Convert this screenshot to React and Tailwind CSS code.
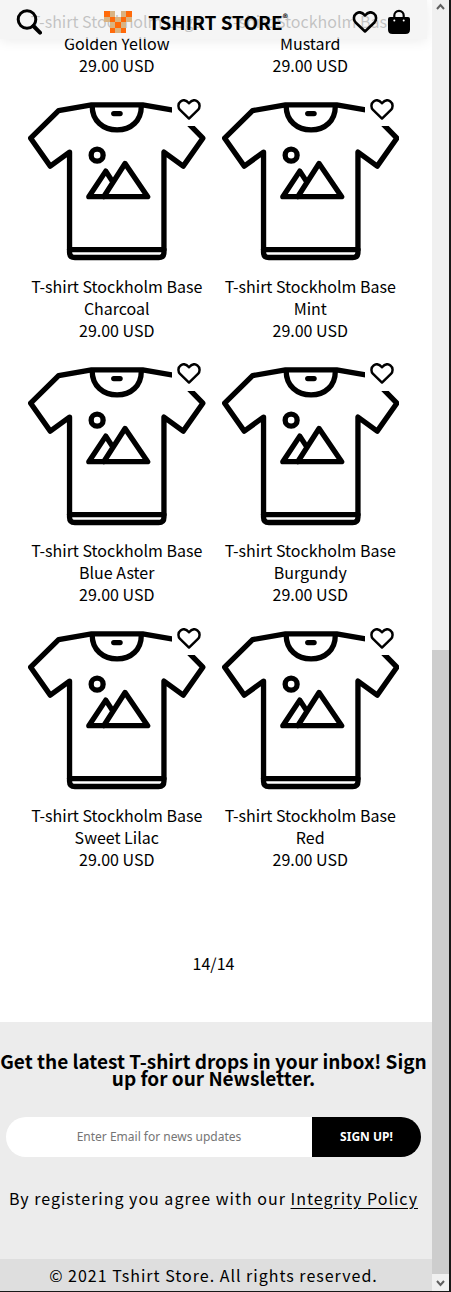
const products = [
  ['Stockholm Logo', 'Golden Yellow'],
  ['Stockholm Base', 'Mustard'],
  ['Stockholm Base', 'Charcoal'],
  ['Stockholm Base', 'Mint'],
  ['Stockholm Base', 'Blue Aster'],
  ['Stockholm Base', 'Burgundy'],
  ['Stockholm Base', 'Sweet Lilac'],
  ['Stockholm Base', 'Red'],
];

function Heart({ className }) {
  return (
    <svg viewBox="0 0 26 23" className={className} fill="none" stroke="black" strokeWidth="2.7" strokeLinejoin="round" aria-hidden="true">
      <path d="M13 21.4 3.2 12C.4 8.8 1.2 4.6 3.8 2.7 6.6.6 10.2 1.4 13 4.7 15.8 1.4 19.4.6 22.2 2.7 24.8 4.6 25.6 8.8 22.8 12Z" />
    </svg>
  );
}

function Shirt() {
  return (
    <svg viewBox="39 4 534 534" className="block w-full" fill="none" stroke="black" strokeWidth="16" strokeLinecap="round" strokeLinejoin="round" aria-hidden="true">
      <path d="M230 43H384L484 60L565 143L506 227L448 185V486Q448 502 432 502H180Q164 502 164 486V185L106 227L47 143L131 60Z" />
      <path d="M232 45C232 91 265 118 307 118S380 91 380 45" />
      <path d="M297 69H316" />
      <circle cx="247" cy="194" r="18" />
      <path d="M164 478H448" />
      <path d="M267 319 331 219 399 319H222L273 242 291 270" />
    </svg>
  );
}

function Product({ name, color, cut }) {
  return (
    <article className="px-2 text-center leading-[22px]">
      {!cut && (
        <div className="relative mb-[5px]">
          <Shirt />
          <button type="button" aria-label="Add to favourites" className="absolute right-0 top-0 flex h-[34px] w-[34px] items-center justify-center bg-white">
            <Heart className="h-[21px] w-[26px]" />
          </button>
        </div>
      )}
      <h2>T-shirt {name}<br />{color}</h2>
      <p>29.00 USD</p>
    </article>
  );
}

function Logo() {
  const orange = ['0 0', '4 0', '1 1', '3 1', '2 2', '1 3', '3 3'];
  return (
    <svg viewBox="0 0 28 22" className="h-[22px] w-7" shapeRendering="crispEdges" aria-hidden="true">
      <path d="M0 0H11.2V5.5H16.8V0H28V11H22.4V22H5.6V11H0Z" fill="#d9b382" />
      {orange.map((p) => {
        const [x, y] = p.split(' ').map(Number);
        return <rect key={p} x={x * 5.6} y={y * 5.5} width="5.6" height="5.5" fill="#ff6a0a" />;
      })}
    </svg>
  );
}

export default function App() {
  return (
    <div className="flex border-b border-r-2 border-[#181818] bg-white font-['Noto_Sans_CJK_SC',sans-serif] text-base text-black">
      <div className="relative min-w-0 flex-1 overflow-hidden">
        <header className="absolute left-0 right-[5px] top-0 z-10 flex h-[39px] items-center bg-[#f2f2f2]/80 px-4 shadow-[0_2px_12px_rgba(0,0,0,0.08)]">
          <button type="button" aria-label="Search" className="mt-1">
            <svg viewBox="0 0 26 26" className="h-[26px] w-[26px]" fill="none" stroke="black" strokeWidth="3" strokeLinecap="round" aria-hidden="true">
              <circle cx="11" cy="10.5" r="8.8" />
              <path d="m17.4 17 6.6 6.6" strokeWidth="4" />
            </svg>
          </button>
          <a href="#" className="mx-auto mt-1 flex items-center gap-4 pr-0.5">
            <Logo />
            <span className="flex whitespace-nowrap text-[19px] font-bold leading-6">TSHIRT STORE<span className="text-[10px] leading-4">®</span></span>
          </a>
          <button type="button" aria-label="Favourites" className="mr-2.5 mt-1"><Heart className="h-[22px] w-[26px]" /></button>
          <button type="button" aria-label="Bag" className="mr-px mt-1">
            <svg viewBox="0 0 22 26" className="h-[26px] w-[22px]" aria-hidden="true">
              <path d="M6.3 11V6.5a4.7 4.7 0 0 1 9.4 0V11" fill="none" stroke="black" strokeWidth="2.2" />
              <path d="M2 8H20q2 0 2 2V20.500q0 4.500-4.500 4.500H4.500Q0 25 0 20.500V10Q0 8 2 8Z" />
              <circle cx="6.3" cy="11.5" r="1" fill="white" /><circle cx="15.7" cy="11.5" r="1" fill="white" />
            </svg>
          </button>
        </header>

        <main className="pl-5 pr-[25px] pt-[10px]">
          <div className="grid grid-cols-2 gap-y-4">
            {products.map(([name, color], i) => (
              <Product key={color} name={name} color={color} cut={i < 2} />
            ))}
          </div>
          <p className="mt-[81px] pb-[47px] text-center leading-6">14/14</p>
        </main>

        <footer className="bg-[#ececec] text-center">
          <div className="pb-[49px] pr-[5px] pt-[30px]">
            <h2 className="-mx-1 text-[19px] font-bold leading-[17px]">Get the latest T-shirt drops in your inbox! Sign up for our Newsletter.</h2>
            <form className="mx-1.5 mt-[31px] flex h-10 overflow-hidden rounded-full" onSubmit={(e) => e.preventDefault()}>
              <input type="email" aria-label="Email" placeholder="Enter Email for news updates" className="min-w-0 flex-1 bg-white text-center font-['Noto_Sans',sans-serif] text-xs placeholder:text-[#757575]" />
              <button type="submit" className="w-[109px] bg-black font-['Noto_Sans',sans-serif] text-xs font-bold text-white">SIGN UP!</button>
            </form>
            <p className="mt-[29px] whitespace-nowrap leading-6 tracking-[1px]">By registering you agree with our <a href="#" className="underline underline-offset-[3px]">Integrity Policy</a></p>
          </div>
          <p className="bg-[#dedede] pr-[5px] leading-8 tracking-[1px]">© 2021 Tshirt Store. All rights reserved.</p>
        </footer>
      </div>

      <div className="flex w-[17px] flex-col bg-[#f0f0f0]" aria-hidden="true">
        <svg viewBox="0 0 17 17" className="h-[17px]" fill="none" stroke="#606060" strokeWidth="2"><path d="m5 9 3.500-4L12 9" /></svg>
        <div className="flex-[633]" />
        <div className="flex-[624] bg-[#cdcdcd]" />
        <svg viewBox="0 0 17 17" className="h-[17px]" fill="none" stroke="#606060" strokeWidth="2"><path d="m5 7 3.500 4L12 7" /></svg>
      </div>
    </div>
  );
}
